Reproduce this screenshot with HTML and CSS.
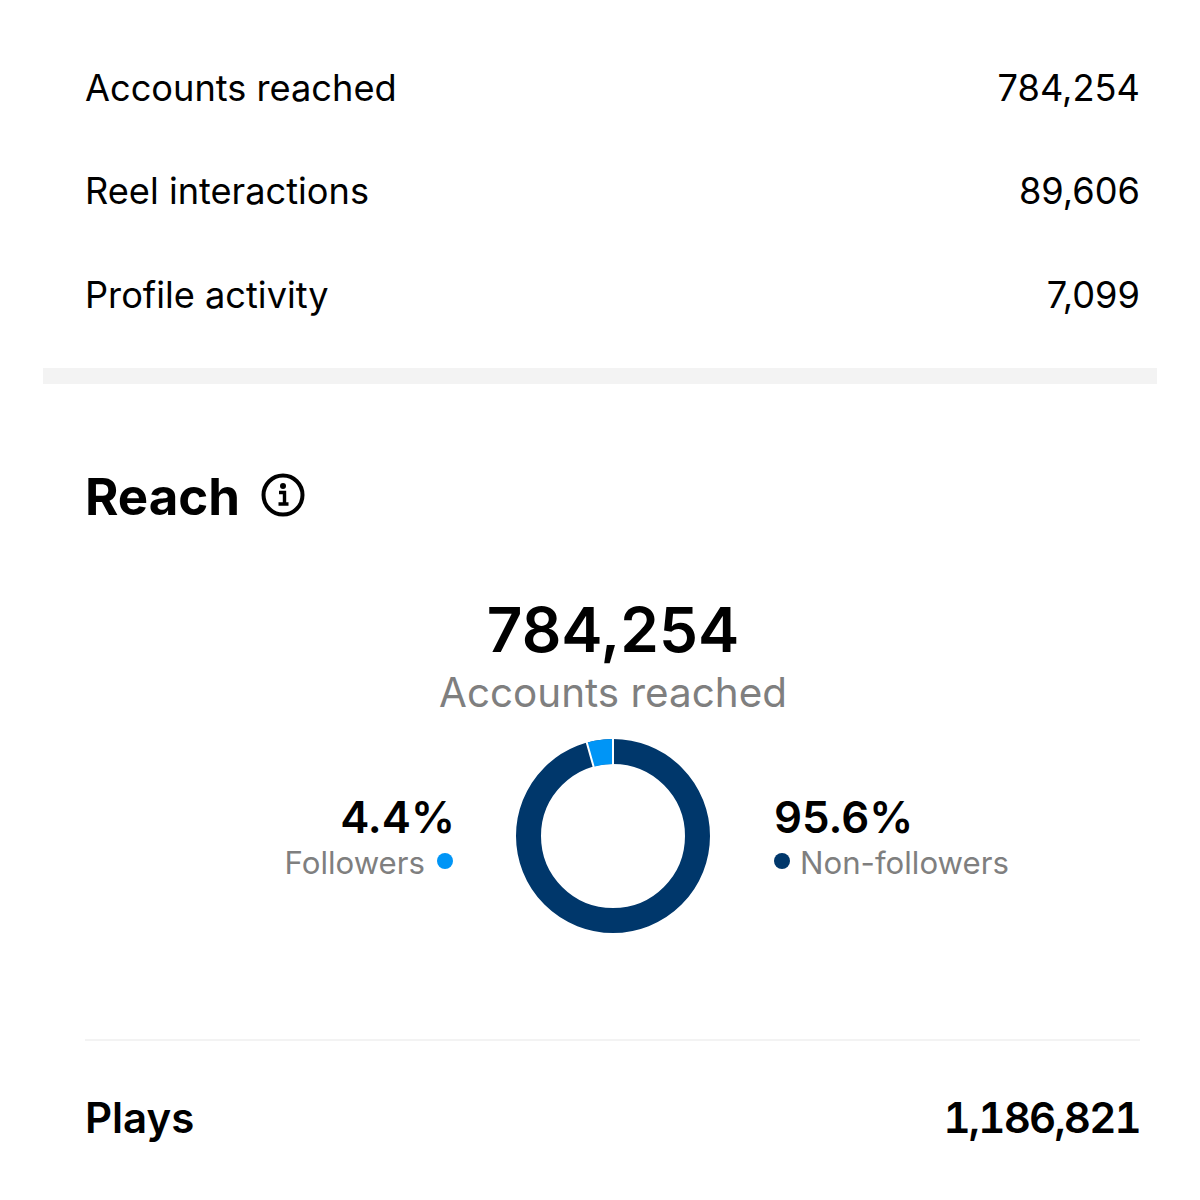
FILE: index.html
```html
<!DOCTYPE html>
<html lang="en">
<head>
  <meta charset="UTF-8" />
  <title>Reel insights</title>
  <link rel="stylesheet" href="styles.css">
</head>
<body>
  <section class="overview">
    <div class="stat-row"><span>Accounts reached</span><span>784,254</span></div>
    <div class="stat-row"><span>Reel interactions</span><span>89,606</span></div>
    <div class="stat-row"><span>Profile activity</span><span>7,099</span></div>
  </section>

  <div class="section-divider"></div>

  <section class="reach">
    <div class="reach-title">
      <h2>Reach</h2>
      <svg class="info-icon" viewBox="0 0 44 44" width="44" height="44">
        <circle cx="22" cy="22" r="19.5" fill="none" stroke="#000" stroke-width="4"/>
        <circle cx="22" cy="13" r="3" fill="#000"/>
        <path d="M18 19.5h5.5v11M17.5 31h10" fill="none" stroke="#000" stroke-width="3.4"/>
      </svg>
    </div>

    <div class="reach-total">784,254</div>
    <div class="reach-label">Accounts reached</div>

    <div class="split">
      <div class="split-side split-left">
        <div class="split-value">4.4%</div>
        <div class="split-legend">Followers <span class="dot dot-followers"></span></div>
      </div>

      <svg class="donut" viewBox="0 0 194 194" width="194" height="194">
        <g transform="rotate(-90 97 97)" fill="none" stroke-width="25">
          <circle cx="97" cy="97" r="84.5" stroke="#00376b"/>
          <circle cx="97" cy="97" r="84.5" stroke="#0095f6" pathLength="1000" stroke-dasharray="44 956" stroke-dashoffset="44"/>
        </g>
        <path d="M97 -2V28M70.2 1.5L78.4 30.5" stroke="#fff" stroke-width="2" fill="none"/>
      </svg>

      <div class="split-side">
        <div class="split-value">95.6%</div>
        <div class="split-legend"><span class="dot dot-non"></span> Non-followers</div>
      </div>
    </div>
  </section>

  <div class="plays-row">
    <span>Plays</span>
    <span class="plays-value">1,186,821</span>
  </div>
</body>
</html>
```
FILE: styles.css
```css
body {
  margin: 0;
  background: #fff;
  color: #000;
  font-family: Inter, "Liberation Sans", sans-serif;
}

.overview {
  padding: 36px 60px 21px 85px;
}

.stat-row {
  display: flex;
  justify-content: space-between;
  align-items: center;
  height: 103.5px;
  font-size: 36.2px;
}

.section-divider {
  height: 16px;
  margin: 0 43px;
  background: #f3f3f3;
}

.reach {
  padding: 78px 60px 0 85px;
}

.reach-title {
  display: flex;
  align-items: center;
  gap: 21px;
  height: 70px;
}

.reach-title h2 {
  margin: 0;
  font-size: 51px;
  font-weight: 700;
}

.info-icon {
  margin-bottom: 4px;
}

.reach-total {
  margin-top: 60px;
  padding-left: 1px;
  font-size: 62px;
  font-weight: 600;
  line-height: 76px;
  text-align: center;
}

.reach-label {
  padding-left: 1px;
  font-size: 40.4px;
  line-height: 50px;
  color: #7f7f7f;
  text-align: center;
}

.split {
  display: grid;
  grid-template-columns: 1fr auto 1fr;
  align-items: center;
  gap: 64px;
  margin-top: 21px;
  padding-left: 1px;
}

.split-side {
  padding-top: 4px;
}

.split-value {
  font-size: 43.8px;
  font-weight: 600;
  line-height: 50px;
}

.split-legend {
  display: flex;
  align-items: center;
  gap: 10px;
  font-size: 31.2px;
  line-height: 40px;
  color: #7f7f7f;
}

.split-left {
  text-align: right;
}

.split-left .split-value {
  margin-right: -3px;
}

.split-left .split-legend {
  justify-content: flex-end;
  gap: 12px;
  margin-right: -1px;
}

.dot {
  width: 16px;
  height: 16px;
  border-radius: 50%;
  margin-bottom: 3px;
}

.dot-followers {
  background: #0095f6;
}

.dot-non {
  background: #00376b;
}

.plays-row {
  display: flex;
  justify-content: space-between;
  align-items: center;
  height: 153px;
  margin: 106px 60px 0 85px;
  border-top: 2px solid #f3f3f3;
  font-size: 42px;
  font-weight: 600;
}

.plays-value {
  font-variant-numeric: tabular-nums;
  letter-spacing: -1.8px;
}
```
